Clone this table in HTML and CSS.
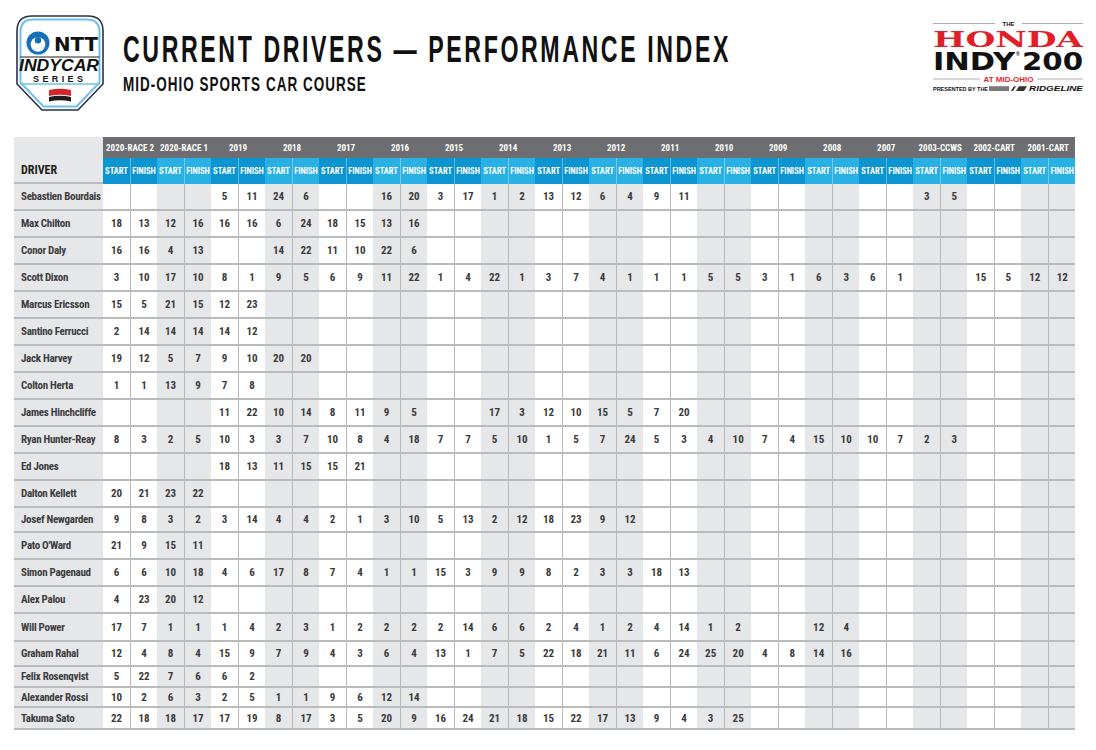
FILE: index.html
```html
<!DOCTYPE html>
<html lang="en">
<head>
<meta charset="utf-8">
<title>Current Drivers — Performance Index</title>
<link rel="stylesheet" href="styles.css">
</head>
<body>
<header class="top">
  <svg class="brand" viewBox="0 0 92 110" role="img" aria-label="NTT IndyCar Series">
    <path class="sh-out" d="M3,27 Q3,12 18,12 L74,12 Q89,12 89,27 L89,80 L64,106 L28,106 L3,80 Z"/>
    <path class="sh-in" d="M6.5,28 Q6.5,15.5 19,15.5 L73,15.5 Q85.5,15.5 85.5,28 L85.5,78.5 L62.5,102.5 L29.5,102.5 L6.5,78.5 Z"/>
    <line class="sh-dark" x1="6.5" y1="53" x2="85.5" y2="53"/>
    <line class="sh-blue" x1="6.5" y1="80" x2="85.5" y2="80"/>
    <circle class="ntt-blue" cx="24" cy="39" r="11.5"/>
    <circle class="ntt-white" cx="24" cy="40.5" r="7.3"/>
    <circle class="ntt-blue" cx="24" cy="36.2" r="3.2"/>
    <text class="lg-ntt" x="40" y="47" textLength="44" lengthAdjust="spacingAndGlyphs">NTT</text>
    <text class="lg-indy" x="5" y="67" textLength="80" lengthAdjust="spacingAndGlyphs">INDYCAR</text>
    <text class="lg-series" x="19" y="78" textLength="50" lengthAdjust="spacing">SERIES</text>
    <path class="flag-red" d="M35,86 Q46,83.5 57,86 L57,92 Q46,89.5 35,92 Z"/>
    <path class="flag-black" d="M35,93 Q46,90.5 57,93 L57,97.5 Q46,95 35,97.5 Z"/>
  </svg>
  <div class="heading">
    <h1 class="title">CURRENT DRIVERS — PERFORMANCE INDEX</h1>
    <p class="subtitle">MID-OHIO SPORTS CAR COURSE</p>
  </div>
  <svg class="event" viewBox="0 0 156 82" role="img" aria-label="The Honda Indy 200 at Mid-Ohio">
    <line class="rule" x1="3" y1="9.5" x2="65" y2="9.5"/>
    <line class="rule" x1="92" y1="9.5" x2="153" y2="9.5"/>
    <text class="ev-the" x="78.5" y="12" text-anchor="middle">THE</text>
    <text class="ev-honda" x="3" y="33" textLength="150" lengthAdjust="spacingAndGlyphs">HONDA</text>
    <text class="ev-indy" x="3" y="56" textLength="82" lengthAdjust="spacingAndGlyphs">INDY</text>
    <text class="ev-reg" x="86" y="42">®</text>
    <text class="ev-indy" x="92" y="56" textLength="61" lengthAdjust="spacingAndGlyphs">200</text>
    <line class="rule" x1="3" y1="65" x2="50" y2="65"/>
    <line class="rule" x1="107" y1="65" x2="153" y2="65"/>
    <text class="ev-at" x="78.5" y="67.5" text-anchor="middle" textLength="50" lengthAdjust="spacingAndGlyphs">AT MID-OHIO</text>
    <text class="ev-pres" x="3" y="77" textLength="55" lengthAdjust="spacingAndGlyphs">PRESENTED BY THE</text>
    <rect class="ev-box" x="59" y="72.2" width="20" height="4.8"/>
    <path class="ev-slash" d="M81,77 L84,72.2 L86,72.2 L83,77 Z M86,77 L89,72.2 L97,72.2 L94,77 Z"/>
    <text class="ev-ridge" x="99" y="77" textLength="54" lengthAdjust="spacingAndGlyphs">RIDGELINE</text>
  </svg>
</header>

<table class="perf">
  <colgroup>
    <col class="name-col">
    <col class="c"><col class="c"><col class="c"><col class="c"><col class="c"><col class="c"><col class="c"><col class="c"><col class="c">
    <col class="c"><col class="c"><col class="c"><col class="c"><col class="c"><col class="c"><col class="c"><col class="c"><col class="c">
    <col class="c"><col class="c"><col class="c"><col class="c"><col class="c"><col class="c"><col class="c"><col class="c"><col class="c">
    <col class="c"><col class="c"><col class="c"><col class="c"><col class="c"><col class="c"><col class="c"><col class="c"><col class="c">
  </colgroup>
  <thead>
    <tr class="groups">
      <th class="driver" rowspan="2">DRIVER</th>
      <th colspan="2">2020-RACE 2</th><th colspan="2">2020-RACE 1</th><th colspan="2">2019</th><th colspan="2">2018</th><th colspan="2">2017</th><th colspan="2">2016</th><th colspan="2">2015</th><th colspan="2">2014</th><th colspan="2">2013</th><th colspan="2">2012</th><th colspan="2">2011</th><th colspan="2">2010</th><th colspan="2">2009</th><th colspan="2">2008</th><th colspan="2">2007</th><th colspan="2">2003-CCWS</th><th colspan="2">2002-CART</th><th colspan="2">2001-CART</th>
    </tr>
    <tr class="labels">
      <th>START</th><th>FINISH</th><th>START</th><th>FINISH</th><th>START</th><th>FINISH</th><th>START</th><th>FINISH</th><th>START</th><th>FINISH</th><th>START</th><th>FINISH</th><th>START</th><th>FINISH</th><th>START</th><th>FINISH</th><th>START</th><th>FINISH</th><th>START</th><th>FINISH</th><th>START</th><th>FINISH</th><th>START</th><th>FINISH</th><th>START</th><th>FINISH</th><th>START</th><th>FINISH</th><th>START</th><th>FINISH</th><th>START</th><th>FINISH</th><th>START</th><th>FINISH</th><th>START</th><th>FINISH</th>
    </tr>
  </thead>
  <tbody>
    <tr><td class="name">Sebastien Bourdais</td><td></td><td></td><td></td><td></td><td>5</td><td>11</td><td>24</td><td>6</td><td></td><td></td><td>16</td><td>20</td><td>3</td><td>17</td><td>1</td><td>2</td><td>13</td><td>12</td><td>6</td><td>4</td><td>9</td><td>11</td><td></td><td></td><td></td><td></td><td></td><td></td><td></td><td></td><td>3</td><td>5</td><td></td><td></td><td></td><td></td></tr>
    <tr><td class="name">Max Chilton</td><td>18</td><td>13</td><td>12</td><td>16</td><td>16</td><td>16</td><td>6</td><td>24</td><td>18</td><td>15</td><td>13</td><td>16</td><td></td><td></td><td></td><td></td><td></td><td></td><td></td><td></td><td></td><td></td><td></td><td></td><td></td><td></td><td></td><td></td><td></td><td></td><td></td><td></td><td></td><td></td><td></td><td></td></tr>
    <tr><td class="name">Conor Daly</td><td>16</td><td>16</td><td>4</td><td>13</td><td></td><td></td><td>14</td><td>22</td><td>11</td><td>10</td><td>22</td><td>6</td><td></td><td></td><td></td><td></td><td></td><td></td><td></td><td></td><td></td><td></td><td></td><td></td><td></td><td></td><td></td><td></td><td></td><td></td><td></td><td></td><td></td><td></td><td></td><td></td></tr>
    <tr><td class="name">Scott Dixon</td><td>3</td><td>10</td><td>17</td><td>10</td><td>8</td><td>1</td><td>9</td><td>5</td><td>6</td><td>9</td><td>11</td><td>22</td><td>1</td><td>4</td><td>22</td><td>1</td><td>3</td><td>7</td><td>4</td><td>1</td><td>1</td><td>1</td><td>5</td><td>5</td><td>3</td><td>1</td><td>6</td><td>3</td><td>6</td><td>1</td><td></td><td></td><td>15</td><td>5</td><td>12</td><td>12</td></tr>
    <tr><td class="name">Marcus Ericsson</td><td>15</td><td>5</td><td>21</td><td>15</td><td>12</td><td>23</td><td></td><td></td><td></td><td></td><td></td><td></td><td></td><td></td><td></td><td></td><td></td><td></td><td></td><td></td><td></td><td></td><td></td><td></td><td></td><td></td><td></td><td></td><td></td><td></td><td></td><td></td><td></td><td></td><td></td><td></td></tr>
    <tr><td class="name">Santino Ferrucci</td><td>2</td><td>14</td><td>14</td><td>14</td><td>14</td><td>12</td><td></td><td></td><td></td><td></td><td></td><td></td><td></td><td></td><td></td><td></td><td></td><td></td><td></td><td></td><td></td><td></td><td></td><td></td><td></td><td></td><td></td><td></td><td></td><td></td><td></td><td></td><td></td><td></td><td></td><td></td></tr>
    <tr><td class="name">Jack Harvey</td><td>19</td><td>12</td><td>5</td><td>7</td><td>9</td><td>10</td><td>20</td><td>20</td><td></td><td></td><td></td><td></td><td></td><td></td><td></td><td></td><td></td><td></td><td></td><td></td><td></td><td></td><td></td><td></td><td></td><td></td><td></td><td></td><td></td><td></td><td></td><td></td><td></td><td></td><td></td><td></td></tr>
    <tr><td class="name">Colton Herta</td><td>1</td><td>1</td><td>13</td><td>9</td><td>7</td><td>8</td><td></td><td></td><td></td><td></td><td></td><td></td><td></td><td></td><td></td><td></td><td></td><td></td><td></td><td></td><td></td><td></td><td></td><td></td><td></td><td></td><td></td><td></td><td></td><td></td><td></td><td></td><td></td><td></td><td></td><td></td></tr>
    <tr><td class="name">James Hinchcliffe</td><td></td><td></td><td></td><td></td><td>11</td><td>22</td><td>10</td><td>14</td><td>8</td><td>11</td><td>9</td><td>5</td><td></td><td></td><td>17</td><td>3</td><td>12</td><td>10</td><td>15</td><td>5</td><td>7</td><td>20</td><td></td><td></td><td></td><td></td><td></td><td></td><td></td><td></td><td></td><td></td><td></td><td></td><td></td><td></td></tr>
    <tr><td class="name">Ryan Hunter-Reay</td><td>8</td><td>3</td><td>2</td><td>5</td><td>10</td><td>3</td><td>3</td><td>7</td><td>10</td><td>8</td><td>4</td><td>18</td><td>7</td><td>7</td><td>5</td><td>10</td><td>1</td><td>5</td><td>7</td><td>24</td><td>5</td><td>3</td><td>4</td><td>10</td><td>7</td><td>4</td><td>15</td><td>10</td><td>10</td><td>7</td><td>2</td><td>3</td><td></td><td></td><td></td><td></td></tr>
    <tr><td class="name">Ed Jones</td><td></td><td></td><td></td><td></td><td>18</td><td>13</td><td>11</td><td>15</td><td>15</td><td>21</td><td></td><td></td><td></td><td></td><td></td><td></td><td></td><td></td><td></td><td></td><td></td><td></td><td></td><td></td><td></td><td></td><td></td><td></td><td></td><td></td><td></td><td></td><td></td><td></td><td></td><td></td></tr>
    <tr><td class="name">Dalton Kellett</td><td>20</td><td>21</td><td>23</td><td>22</td><td></td><td></td><td></td><td></td><td></td><td></td><td></td><td></td><td></td><td></td><td></td><td></td><td></td><td></td><td></td><td></td><td></td><td></td><td></td><td></td><td></td><td></td><td></td><td></td><td></td><td></td><td></td><td></td><td></td><td></td><td></td><td></td></tr>
    <tr class="h25"><td class="name">Josef Newgarden</td><td>9</td><td>8</td><td>3</td><td>2</td><td>3</td><td>14</td><td>4</td><td>4</td><td>2</td><td>1</td><td>3</td><td>10</td><td>5</td><td>13</td><td>2</td><td>12</td><td>18</td><td>23</td><td>9</td><td>12</td><td></td><td></td><td></td><td></td><td></td><td></td><td></td><td></td><td></td><td></td><td></td><td></td><td></td><td></td><td></td><td></td></tr>
    <tr><td class="name">Pato O'Ward</td><td>21</td><td>9</td><td>15</td><td>11</td><td></td><td></td><td></td><td></td><td></td><td></td><td></td><td></td><td></td><td></td><td></td><td></td><td></td><td></td><td></td><td></td><td></td><td></td><td></td><td></td><td></td><td></td><td></td><td></td><td></td><td></td><td></td><td></td><td></td><td></td><td></td><td></td></tr>
    <tr><td class="name">Simon Pagenaud</td><td>6</td><td>6</td><td>10</td><td>18</td><td>4</td><td>6</td><td>17</td><td>8</td><td>7</td><td>4</td><td>1</td><td>1</td><td>15</td><td>3</td><td>9</td><td>9</td><td>8</td><td>2</td><td>3</td><td>3</td><td>18</td><td>13</td><td></td><td></td><td></td><td></td><td></td><td></td><td></td><td></td><td></td><td></td><td></td><td></td><td></td><td></td></tr>
    <tr><td class="name">Alex Palou</td><td>4</td><td>23</td><td>20</td><td>12</td><td></td><td></td><td></td><td></td><td></td><td></td><td></td><td></td><td></td><td></td><td></td><td></td><td></td><td></td><td></td><td></td><td></td><td></td><td></td><td></td><td></td><td></td><td></td><td></td><td></td><td></td><td></td><td></td><td></td><td></td><td></td><td></td></tr>
    <tr class="h28"><td class="name">Will Power</td><td>17</td><td>7</td><td>1</td><td>1</td><td>1</td><td>4</td><td>2</td><td>3</td><td>1</td><td>2</td><td>2</td><td>2</td><td>2</td><td>14</td><td>6</td><td>6</td><td>2</td><td>4</td><td>1</td><td>2</td><td>4</td><td>14</td><td>1</td><td>2</td><td></td><td></td><td>12</td><td>4</td><td></td><td></td><td></td><td></td><td></td><td></td><td></td><td></td></tr>
    <tr class="h25"><td class="name">Graham Rahal</td><td>12</td><td>4</td><td>8</td><td>4</td><td>15</td><td>9</td><td>7</td><td>9</td><td>4</td><td>3</td><td>6</td><td>4</td><td>13</td><td>1</td><td>7</td><td>5</td><td>22</td><td>18</td><td>21</td><td>11</td><td>6</td><td>24</td><td>25</td><td>20</td><td>4</td><td>8</td><td>14</td><td>16</td><td></td><td></td><td></td><td></td><td></td><td></td><td></td><td></td></tr>
    <tr class="h21"><td class="name">Felix Rosenqvist</td><td>5</td><td>22</td><td>7</td><td>6</td><td>6</td><td>2</td><td></td><td></td><td></td><td></td><td></td><td></td><td></td><td></td><td></td><td></td><td></td><td></td><td></td><td></td><td></td><td></td><td></td><td></td><td></td><td></td><td></td><td></td><td></td><td></td><td></td><td></td><td></td><td></td><td></td><td></td></tr>
    <tr class="h20"><td class="name">Alexander Rossi</td><td>10</td><td>2</td><td>6</td><td>3</td><td>2</td><td>5</td><td>1</td><td>1</td><td>9</td><td>6</td><td>12</td><td>14</td><td></td><td></td><td></td><td></td><td></td><td></td><td></td><td></td><td></td><td></td><td></td><td></td><td></td><td></td><td></td><td></td><td></td><td></td><td></td><td></td><td></td><td></td><td></td><td></td></tr>
    <tr class="h22"><td class="name">Takuma Sato</td><td>22</td><td>18</td><td>18</td><td>17</td><td>17</td><td>19</td><td>8</td><td>17</td><td>3</td><td>5</td><td>20</td><td>9</td><td>16</td><td>24</td><td>21</td><td>18</td><td>15</td><td>22</td><td>17</td><td>13</td><td>9</td><td>4</td><td>3</td><td>25</td><td></td><td></td><td></td><td></td><td></td><td></td><td></td><td></td><td></td><td></td><td></td><td></td></tr>
  </tbody>
</table>
</body>
</html>
```

FILE: styles.css
```css
* { box-sizing: border-box; }

body {
  margin: 0;
  width: 1096px;
  background: #ffffff;
  color: #1a1a1a;
  font-family: "Liberation Sans", Arial, sans-serif;
}

/* ---------- header ---------- */
.top {
  display: flex;
  align-items: flex-start;
  height: 137px;
}

.brand {
  flex: none;
  width: 92px;
  height: 110px;
  margin: 4px 0 0 14px;
}

.sh-out { fill: #ffffff; stroke: #27324b; stroke-width: 1.6; }
.sh-in { fill: none; stroke: #6fbfea; stroke-width: 2; }
.sh-dark { stroke: #222222; stroke-width: 1.2; }
.sh-blue { stroke: #6fbfea; stroke-width: 1.5; }
.ntt-blue { fill: #1470b8; }
.ntt-white { fill: #ffffff; }
.lg-ntt { font: 700 20px "DejaVu Sans", sans-serif; fill: #111111; }
.lg-indy { font: italic 700 16px "Liberation Sans", sans-serif; fill: #111111; }
.lg-series { font: 700 9px "Liberation Sans", sans-serif; fill: #111111; }
.flag-red { fill: #d7242b; }
.flag-black { fill: #1c1c1c; }

.heading {
  flex: 1;
  min-width: 0;
  margin-left: 17px;
  padding-top: 32px;
}

.title {
  margin: 0;
  font: 700 36px/36px "Liberation Sans", Arial, sans-serif;
  letter-spacing: 4px;
  white-space: nowrap;
  color: #111111;
  transform: scaleX(0.644);
  transform-origin: 0 0;
}

.subtitle {
  margin: 7px 0 0;
  font: 700 19.5px/19.5px "Liberation Sans", Arial, sans-serif;
  letter-spacing: 1.5px;
  white-space: nowrap;
  color: #111111;
  transform: scaleX(0.69);
  transform-origin: 0 0;
}

.event {
  flex: none;
  width: 156px;
  height: 82px;
  margin: 14px 10px 0 0;
}

.rule { stroke: #9d9d9d; stroke-width: 0.8; }
.ev-the { font: 700 6px "Liberation Sans", sans-serif; fill: #111111; }
.ev-honda { font: 700 23px "DejaVu Serif", serif; fill: #e11f2a; }
.ev-indy { font: 700 25px "DejaVu Sans", sans-serif; fill: #111111; }
.ev-reg { font: 700 5px "Liberation Sans", sans-serif; fill: #111111; }
.ev-at { font: 700 6.5px "Liberation Sans", sans-serif; fill: #e11f2a; }
.ev-pres { font: 700 6px "Liberation Sans", sans-serif; fill: #111111; }
.ev-box { fill: #7a7a7a; }
.ev-slash { fill: #333333; }
.ev-ridge { font: italic 700 7px "Liberation Sans", sans-serif; fill: #111111; }

/* ---------- table ---------- */
.perf {
  margin-left: 14px;
  width: 1061px;
  table-layout: fixed;
  border-collapse: separate;
  border-spacing: 0;
  font-family: "Liberation Sans Narrow", "Arial Narrow", "Roboto Condensed", "DejaVu Sans Condensed", "Liberation Sans", sans-serif;
  font-stretch: condensed;
}

.name-col { width: 89px; }
.c { width: 27px; }

.perf th { padding: 0; font-weight: 700; white-space: nowrap; overflow: hidden; }

.groups { height: 21px; }
.groups th {
  background: #6d6e71;
  color: #ffffff;
  font-size: 9px;
  text-align: center;
}

.groups th.driver {
  background: #e6e7e8;
  color: #231f20;
  font-size: 12px;
  text-align: left;
  vertical-align: bottom;
  padding: 0 0 5px 7px;
  border-bottom: 2px solid #b9babc;
}

.labels { height: 26px; }
.labels th {
  background: #0c95d0;
  color: #ffffff;
  font-size: 8.5px;
  text-align: center;
}
.labels th:nth-child(4n+3),
.labels th:nth-child(4n+4) { background: #29b0e4; }
.labels th:nth-child(even) { border-left: 1px solid rgba(255, 255, 255, 0.35); }

tbody tr { height: 27px; }
tbody tr.h25 { height: 25px; }
tbody tr.h28 { height: 28px; }
tbody tr.h21 { height: 21px; }
tbody tr.h20 { height: 20px; }
tbody tr.h22 { height: 22px; }

tbody td {
  padding: 0;
  border-bottom: 2px solid #b9babc;
  text-align: center;
  font-size: 11px;
  font-weight: 700;
  color: #3a3a3a;
  white-space: nowrap;
}
tbody td:nth-child(2n+3) { border-left: 1px solid #b9babc; }
tbody td:nth-child(4n+4),
tbody td:nth-child(4n+5) { background: #e6e7e8; }

tbody td.name {
  background: #e6e7e8;
  text-align: left;
  padding-left: 7px;
  color: #3d3d3f;
  letter-spacing: -0.3px;
  overflow: hidden;
}
```
